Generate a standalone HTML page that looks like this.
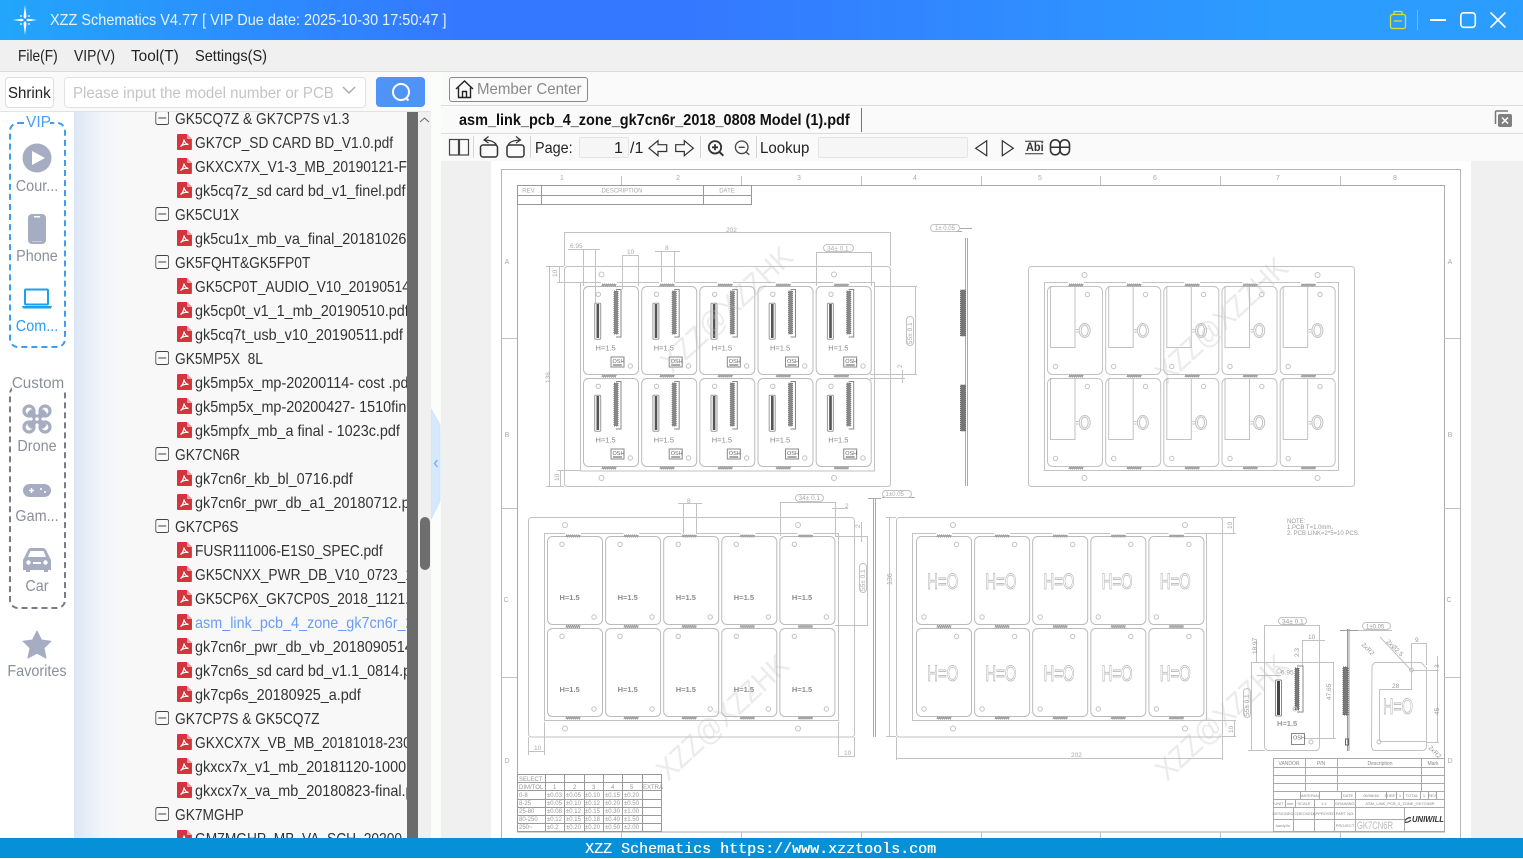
<!DOCTYPE html>
<html><head><meta charset="utf-8"><title>XZZ Schematics</title>
<style>
html,body{margin:0;padding:0;width:1523px;height:858px;overflow:hidden;background:#fff;font-family:"Liberation Sans","Noto Sans CJK SC",sans-serif;color:#333}
.a{position:absolute}
.t{position:absolute;white-space:pre;font-size:16px;line-height:20px;transform-origin:0 0}
#tree{position:absolute;left:74px;top:112px;width:333px;height:726px;overflow:hidden;background:linear-gradient(90deg,#dbe6f5 0,#f2f5f9 28px,#f8f8f8 50px)}
.r{position:absolute;height:24px;line-height:27px;font-size:16px;white-space:pre;color:#333;transform:scaleX(.86);transform-origin:0 0}
.g{left:101px}.c{left:121px}
.r svg{position:absolute;display:block}
.g svg{left:-23.260px;top:5px;width:16.280px;height:14px}
.c svg{left:-20.930px;top:4px;width:17.440px;height:16px}
.r.l{transform:scaleX(.9)}
.c.l svg{left:-20px;width:16.670px}
svg text{font-family:"Liberation Sans",sans-serif}
.side{font-size:16px;color:#8b8f98;text-align:center;width:74px;left:0;position:absolute;line-height:20px;transform:scaleX(.9)}
</style></head><body>
<svg width="0" height="0" style="position:absolute"><defs>
<symbol id="pdf" viewBox="0 0 15 16" preserveAspectRatio="none"><path d="M0 1Q0 0 1 0H10L15 5V15Q15 16 14 16H1Q0 16 0 15Z" fill="#d4343c"/><path d="M10 0V5H15Z" fill="#ee9a9e"/><path d="M3.500 12.500C5.500 11.500 7 8 7 5.500C7.500 8 9 10 11.500 10.500C9 10 6 10.500 3.500 12.500Z" fill="none" stroke="#fff" stroke-width="1.200"/></symbol>
<symbol id="minus" viewBox="0 0 14 14" preserveAspectRatio="none"><rect x=".5" y=".5" width="13" height="13" rx="2" fill="#fafafa" stroke="#444"/><path d="M3 7H11" stroke="#444"/></symbol>
</defs></svg>

<!-- title bar -->
<div class="a" style="left:0;top:0;width:1523px;height:40px;background:linear-gradient(90deg,#22a6fb 0,#3478ff 30%,#3478ff 45%,#2c9dff 85%,#2b9dff 100%)"></div>
<svg class="a" style="left:11px;top:5px" width="28" height="30" viewBox="0 0 28 30"><path d="M14 0L15.500 11.500 14 15 12.500 11.500ZM14 30L12.500 18.500 14 15 15.500 18.500ZM2 15L10.500 13.800 14 15 10.500 16.200ZM26 15L17.500 16.200 14 15 17.500 13.800Z" fill="#fff"/><circle cx="14" cy="15" r="1.500" fill="#3a8cff"/><circle cx="10" cy="11" r=".9" fill="#fff"/><circle cx="18" cy="11" r=".9" fill="#fff"/><circle cx="10" cy="19" r=".9" fill="#fff"/><circle cx="18" cy="19" r=".9" fill="#fff"/></svg>
<div class="t" id="title" style="left:50px;top:11px;color:#e6f2ff;transform:scaleX(.905)">XZZ Schematics V4.77 [ VIP Due date: 2025-10-30 17:50:47 ]</div>
<svg class="a" style="left:1385px;top:8px" width="130" height="24" viewBox="0 0 130 24" fill="none"><rect x="5.500" y="6.500" width="15" height="14" rx="2" stroke="#d8e22c" stroke-width="1.300"/><path d="M9 6.500V4.500Q9 3.500 10 3.500H16Q17 3.500 17 4.500V6.500M9 13H17" stroke="#d8e22c" stroke-width="1.300"/><path d="M32.500 2V22" stroke="#6ebcf5"/><path d="M45 12H61" stroke="#fff" stroke-width="2"/><rect x="75.800" y="4.800" width="14.500" height="14.500" rx="3" stroke="#fff" stroke-width="1.600"/><path d="M105.500 4.500L120.500 19.500M120.500 4.500L105.500 19.500" stroke="#fff" stroke-width="1.600"/></svg>

<!-- menu -->
<div class="a" style="left:0;top:40px;width:1523px;height:31px;background:#f0f0f0;border-bottom:1px solid #dcdcdc"></div>
<div class="t" style="left:18px;top:47px;color:#222;transform:scaleX(.86)">File(F)</div>
<div class="t" style="left:74px;top:47px;color:#222;transform:scaleX(.87)">VIP(V)</div>
<div class="t" style="left:131px;top:47px;color:#222;transform:scaleX(.96)">Tool(T)</div>
<div class="t" style="left:195px;top:47px;color:#222;transform:scaleX(.91)">Settings(S)</div>

<!-- search row -->
<div class="a" style="left:0;top:72px;width:431px;height:39px;background:#fafafa;border-bottom:1px solid #e2e2e2"></div>
<div class="a" style="left:5px;top:77px;width:47px;height:29px;background:#fff;border:1px solid #dedede;border-radius:4px"></div>
<div class="t" style="left:8px;top:84px;color:#222;transform:scaleX(.94)">Shrink</div>
<div class="a" style="left:64px;top:77px;width:300px;height:29px;background:#fff;border:1px solid #e2e2e2;border-radius:4px"></div>
<div class="t" style="left:73px;top:84px;color:#c4c4c4;transform:scaleX(.94)">Please input the model number or PCB</div>
<svg class="a" style="left:341px;top:85px" width="16" height="12"><path d="M2 2L8 8L14 2" fill="none" stroke="#aaa" stroke-width="1.400"/></svg>
<div class="a" style="left:376px;top:77px;width:49px;height:30px;background:#4f93f7;border-radius:4px"></div>
<svg class="a" style="left:388px;top:80px" width="26" height="24" fill="none" stroke="#fff" stroke-width="2"><circle cx="13" cy="12" r="8"/><path d="M18 18L20.500 20.500"/></svg>

<!-- left nav -->
<div class="a" style="left:0;top:112px;width:74px;height:726px;background:#fff"></div>
<div class="a" style="left:9px;top:122px;width:53px;height:222px;border:2px dashed #3f9cf3;border-radius:9px"></div>
<div class="a" style="left:26px;top:114px;width:24px;height:17px;background:#fff;text-align:center;color:#4a9df0;font-size:15.500px;line-height:18px">VIP</div>
<svg class="a" style="left:22px;top:143px" width="30" height="30"><circle cx="15" cy="15" r="14.500" fill="#a6adc3"/><path d="M10 8L23 15L10 22Z" fill="#fff"/></svg>
<div class="side" style="top:177px">Cour...</div>
<svg class="a" style="left:27px;top:213px" width="20" height="32"><rect x="1" y="1" width="18" height="30" rx="4" fill="#a6adc3"/><rect x="7" y="3" width="6" height="1.500" fill="#fff"/><rect x="5" y="28" width="10" height="1" fill="#c8cddc"/></svg>
<div class="side" style="top:247px">Phone</div>
<svg class="a" style="left:21px;top:288px" width="32" height="22"><rect x="4" y="1.500" width="23" height="15" rx="1" fill="#fff" stroke="#1aa0ef" stroke-width="2"/><path d="M1 18H31L30 20.500H2Z" fill="#1aa0ef"/></svg>
<div class="side" style="top:317px;color:#2d9bf0">Com...</div>

<div class="a" style="left:9px;top:385px;width:53px;height:220px;border:2px dashed #777d88;border-radius:9px"></div>
<div class="a" style="left:12px;top:374px;width:52px;height:16px;background:#fff"></div>
<div class="side" style="top:374px;left:1px;transform:scaleX(.95)">Custom</div>
<svg class="a" style="left:22px;top:404px" width="30" height="30" fill="none" stroke="#a6adc3"><path d="M7 7L23 23M23 7L7 23" stroke-width="5.500"/><circle cx="7" cy="7" r="5" stroke-width="3.200"/><circle cx="23" cy="7" r="5" stroke-width="3.200"/><circle cx="7" cy="23" r="5" stroke-width="3.200"/><circle cx="23" cy="23" r="5" stroke-width="3.200"/><circle cx="15" cy="15" r="2.500" fill="#fff" stroke-width="1.500"/></svg>
<div class="side" style="top:437px">Drone</div>
<svg class="a" style="left:22px;top:483px" width="30" height="16"><rect x="1" y="1" width="28" height="13" rx="6.500" fill="#a6adc3"/><path d="M7 7.500H12M9.500 5V10" stroke="#fff" stroke-width="1.400"/><circle cx="19" cy="6" r="1" fill="#fff"/><circle cx="23" cy="9" r="1" fill="#fff"/></svg>
<div class="side" style="top:507px">Gam...</div>
<svg class="a" style="left:22px;top:546px" width="30" height="28"><path d="M2 12L6 4Q7 2 9 2H21Q23 2 24 4L28 12Q29 13 29 15V24H26V26H22V24H8V26H4V24H1V15Q1 13 2 12Z" fill="#a6adc3"/><path d="M6 11L8.500 5H21.500L24 11Z" fill="#fff"/><circle cx="6.500" cy="16.500" r="2.200" fill="#fff"/><circle cx="23.500" cy="16.500" r="2.200" fill="#fff"/><rect x="11" y="16" width="8" height="2" fill="#fff"/></svg>
<div class="side" style="top:577px">Car</div>
<svg class="a" style="left:22px;top:630px" width="30" height="29"><path d="M15 1L19.500 10L29 11.200L22 18L24 28L15 23.200L6 28L8 18L1 11.200L10.500 10Z" fill="#a6adc3" stroke="#a6adc3" stroke-linejoin="round"/></svg>
<div class="side" style="top:662px">Favorites</div>

<!-- tree -->
<div id="tree">
<div class="r g" style="top:-6px"><svg><use href="#minus"/></svg>GK5CQ7Z &amp; GK7CP7S v1.3</div>
<div class="r c" style="top:18px"><svg><use href="#pdf"/></svg>GK7CP_SD CARD BD_V1.0.pdf</div>
<div class="r c" style="top:42px"><svg><use href="#pdf"/></svg>GKXCX7X_V1-3_MB_20190121-F</div>
<div class="r c l" style="top:66px"><svg><use href="#pdf"/></svg>gk5cq7z_sd card bd_v1_finel.pdf</div>
<div class="r g" style="top:90px"><svg><use href="#minus"/></svg>GK5CU1X</div>
<div class="r c l" style="top:114px"><svg><use href="#pdf"/></svg>gk5cu1x_mb_va_final_20181026</div>
<div class="r g" style="top:138px"><svg><use href="#minus"/></svg>GK5FQHT&amp;GK5FP0T</div>
<div class="r c" style="top:162px"><svg><use href="#pdf"/></svg>GK5CP0T_AUDIO_V10_20190514</div>
<div class="r c l" style="top:186px"><svg><use href="#pdf"/></svg>gk5cp0t_v1_1_mb_20190510.pdf</div>
<div class="r c l" style="top:210px"><svg><use href="#pdf"/></svg>gk5cq7t_usb_v10_20190511.pdf</div>
<div class="r g" style="top:234px"><svg><use href="#minus"/></svg>GK5MP5X  8L</div>
<div class="r c l" style="top:258px"><svg><use href="#pdf"/></svg>gk5mp5x_mp-20200114- cost .pdf</div>
<div class="r c l" style="top:282px"><svg><use href="#pdf"/></svg>gk5mp5x_mp-20200427- 1510final</div>
<div class="r c l" style="top:306px"><svg><use href="#pdf"/></svg>gk5mpfx_mb_a final - 1023c.pdf</div>
<div class="r g" style="top:330px"><svg><use href="#minus"/></svg>GK7CN6R</div>
<div class="r c l" style="top:354px"><svg><use href="#pdf"/></svg>gk7cn6r_kb_bl_0716.pdf</div>
<div class="r c l" style="top:378px"><svg><use href="#pdf"/></svg>gk7cn6r_pwr_db_a1_20180712.pdf</div>
<div class="r g" style="top:402px"><svg><use href="#minus"/></svg>GK7CP6S</div>
<div class="r c" style="top:426px"><svg><use href="#pdf"/></svg>FUSR111006-E1S0_SPEC.pdf</div>
<div class="r c" style="top:450px"><svg><use href="#pdf"/></svg>GK5CNXX_PWR_DB_V10_0723_1</div>
<div class="r c" style="top:474px"><svg><use href="#pdf"/></svg>GK5CP6X_GK7CP0S_2018_1121.pdf</div>
<div class="r c l" style="top:498px;color:#6a9cf5"><svg><use href="#pdf"/></svg>asm_link_pcb_4_zone_gk7cn6r_2018</div>
<div class="r c l" style="top:522px"><svg><use href="#pdf"/></svg>gk7cn6r_pwr_db_vb_2018090514</div>
<div class="r c l" style="top:546px"><svg><use href="#pdf"/></svg>gk7cn6s_sd card bd_v1.1_0814.pdf</div>
<div class="r c l" style="top:570px"><svg><use href="#pdf"/></svg>gk7cp6s_20180925_a.pdf</div>
<div class="r g" style="top:594px"><svg><use href="#minus"/></svg>GK7CP7S &amp; GK5CQ7Z</div>
<div class="r c" style="top:618px"><svg><use href="#pdf"/></svg>GKXCX7X_VB_MB_20181018-2300</div>
<div class="r c l" style="top:642px"><svg><use href="#pdf"/></svg>gkxcx7x_v1_mb_20181120-1000</div>
<div class="r c l" style="top:666px"><svg><use href="#pdf"/></svg>gkxcx7x_va_mb_20180823-final.pdf</div>
<div class="r g" style="top:690px"><svg><use href="#minus"/></svg>GK7MGHP</div>
<div class="r c" style="top:714px"><svg><use href="#pdf"/></svg>GM7MGHP_MB_VA_SCH_20200</div>
</div>
<!-- scrollbars -->
<div class="a" style="left:407px;top:112px;width:11px;height:726px;background:#6b6b6b"></div>
<div class="a" style="left:418px;top:112px;width:13px;height:726px;background:#f0f0f0"></div>
<svg class="a" style="left:418px;top:115px" width="13" height="10"><path d="M2 7L6.500 3L11 7" fill="none" stroke="#666"/></svg>
<div class="a" style="left:419.500px;top:517px;width:10px;height:53px;background:#6e6e6e;border-radius:5px"></div>
<div class="a" style="left:431px;top:72px;width:10px;height:766px;background:#fbfdfb;border-right:1px solid #e0e0e0"></div>
<svg class="a" style="left:431px;top:405px" width="10" height="118"><path d="M0 4L9 20V96L0 114Z" fill="#d6e9fc" stroke="#cfe3f8"/><path d="M6.500 55L3.500 58.500L6.500 62" fill="none" stroke="#6aaaf0" stroke-width="1.200"/></svg>

<!-- right panel -->
<div class="a" style="left:441px;top:72px;width:1082px;height:33px;background:#fafafa;border-bottom:1px solid #dcdcdc"></div>
<div class="a" style="left:441px;top:106px;width:1082px;height:27px;background:#fafafa;border-bottom:1px solid #dcdcdc"></div>
<div class="a" style="left:441px;top:134px;width:1082px;height:27px;background:#fafafa"></div>
<div class="a" style="left:449px;top:77px;width:137px;height:23px;border:1px solid #8a8a8a;border-radius:3px"></div>
<svg class="a" style="left:455px;top:79px" width="19" height="20" fill="none" stroke="#222" stroke-width="1.400"><path d="M1 10L9.500 2L18 10M3.500 8.500V18.500H15.500V8.500M7.500 18.500V12.500H11.500V18.500"/></svg>
<div class="t" style="left:477px;top:80px;color:#8a8a8a;transform:scaleX(.94)">Member Center</div>
<div class="t" style="left:459px;top:111px;color:#111;font-weight:bold;transform:scaleX(.904)">asm_link_pcb_4_zone_gk7cn6r_2018_0808 Model (1).pdf</div>
<div class="a" style="left:861px;top:108px;width:1px;height:24px;background:#777"></div>
<svg class="a" style="left:1493px;top:109px" width="20" height="20"><path d="M2.500 15V3Q2.500 2 3.500 2H15" fill="none" stroke="#777" stroke-width="1.500"/><rect x="5" y="5" width="14" height="13" rx="2" fill="#808080"/><path d="M9 8.500L15 14.500M15 8.500L9 14.500" stroke="#fff" stroke-width="1.500"/></svg>

<!-- toolbar -->
<svg class="a" style="left:441px;top:134px" width="640" height="27" fill="none" stroke="#333" stroke-width="1.200">
<rect x="8.500" y="5.500" width="9" height="15.500" stroke="#444"/><rect x="18.500" y="5.500" width="9" height="15.500" stroke="#444"/>
<path d="M32.500 2V24M89.500 2V24M259.500 2V24M315.500 2V24" stroke="#d5d5d5" stroke-width="1"/>
<rect x="39.500" y="11" width="17" height="12" rx="2.500" stroke-width="1.500"/><path d="M55.500 11Q53 6.500 44 6M47.500 2.500L43 6L47.500 9" stroke-width="1.200"/>
<rect x="66" y="11" width="17" height="12" rx="2.500" stroke-width="1.500"/><path d="M67 11Q69.500 6.500 78.500 6M75 2.500L79.500 6L75 9" stroke-width="1.200"/>
<path d="M208 14.200L217 6.700V10.700H225.700V17.500H217V21.700Z"/><path d="M252.300 14.200L243.300 6.700V10.700H234.700V17.500H243.300V21.700Z"/>
<circle cx="274" cy="13.300" r="6.200" stroke-width="1.800"/><path d="M278.500 18L282.300 21.700" stroke-width="2"/><path d="M271 13.300H277M274 10.300V16.300" stroke-width="1.800"/>
<circle cx="300.700" cy="13.300" r="6.300" stroke="#444" stroke-width="1.300"/><path d="M305 18L308.300 20.700M297.700 13.300H303.700" stroke="#444" stroke-width="1.300"/>
<path d="M545.700 6.700L534.700 14.200L545.700 21.700Z"/><path d="M561.300 6.700L572.300 14.200L561.300 21.700Z"/>
<path d="M584 7.300H602.300M584 19.800H602.300" stroke-width="1"/>
<rect x="609.500" y="5.800" width="9.500" height="15" rx="4.700" stroke-width="1.600"/><rect x="619" y="5.800" width="9.500" height="15" rx="4.700" stroke-width="1.600"/><path d="M609.500 13.300H628.500" stroke-width="1.500"/>
</svg>
<div class="t" style="left:1026px;top:142px;font-size:11.500px;font-weight:bold;color:#333;line-height:12px;transform:scaleX(.95)">Abi</div>
<div class="t" style="left:535px;top:139px;color:#222;transform:scaleX(.9)">Page:</div>
<div class="a" style="left:579px;top:137px;width:48px;height:19px;background:#f6f6f6;border:1px solid #e4e4e4;border-radius:2px"></div>
<div class="t" style="left:614px;top:139px;color:#222">1</div>
<div class="t" style="left:630px;top:139px;color:#222">/1</div>
<div class="t" style="left:760px;top:139px;color:#222;transform:scaleX(.94)">Lookup</div>
<div class="a" style="left:818px;top:137px;width:148px;height:19px;background:#f6f6f6;border:1px solid #e4e4e4;border-radius:2px"></div>

<!-- viewer -->
<div class="a" style="left:441px;top:161px;width:1082px;height:677px;background:#f0f0f0"></div>
<div class="a" style="left:491px;top:161px;width:980px;height:677px;background:#fff"></div>
<svg class="a" style="left:0;top:0" width="1523" height="838" viewBox="0 0 1523 838" fill="none" stroke="#c2c2c2" stroke-width="1">
<defs>
<g id="ba"><rect x=".5" y=".5" width="55" height="88" rx="5" fill="#fff" stroke="#bbb"/>
<circle cx="15.300" cy="8.300" r="2.200"/><circle cx="47.300" cy="80" r="2.200"/>
<rect x="11.700" y="17.300" width="6" height="36" rx="1" stroke="#999" fill="#fff"/><rect x="13.500" y="18" width="2.600" height="34" fill="#555" stroke="none"/>
<path d="M33 3.500H38V51H33" stroke="#888"/><rect x="31" y="5" width="4" height="43" fill="#888" stroke="#777" stroke-dasharray="1 1"/>
<text x="12.500" y="64.500" font-size="7.500" fill="#888" stroke="none">H=1.5</text>
<rect x="28" y="71" width="13" height="10" fill="#fff" stroke="#888"/><text x="29.500" y="77" font-size="5.500" fill="#666" stroke="none">OSH</text><path d="M30 79H39" stroke="#555"/></g>
<g id="bb"><rect x=".5" y=".5" width="55" height="88" rx="5" fill="#fff"/>
<rect x="3.500" y=".5" width="24.500" height="61" />
<circle cx="40.300" cy="8.500" r="2.200"/><circle cx="8.500" cy="80.500" r="2.200"/>
<ellipse cx="37.700" cy="44.500" rx="5.500" ry="7"/><ellipse cx="37.700" cy="44.500" rx="3.500" ry="5.500"/><path d="M29 43.500H31.500M29 46H31.500"/></g>
<g id="bc"><rect x=".5" y=".5" width="55" height="88" rx="5" fill="#fff" stroke="#bbb"/><circle cx="15" cy="8.300" r="2.200"/><circle cx="47" cy="81" r="2.200"/>
<text x="12.500" y="64" font-size="7.500" font-weight="bold" fill="#8c8c8c" stroke="none">H=1.5</text></g>
<g id="bd"><rect x=".5" y=".5" width="55" height="88" rx="5" fill="#fff" stroke="#bbb"/><circle cx="40.500" cy="8.500" r="2.200"/><circle cx="8" cy="81" r="2.200"/>
<text x="11.300" y="53" font-size="22" fill="#fff" stroke="#b0b0b0" stroke-width=".7" textLength="31" lengthAdjust="spacingAndGlyphs">H=O</text></g>
<g id="tab"><rect x="0" y="0" width="14" height="2" fill="#aaa" stroke="#999" stroke-dasharray="1 1"/></g>
<g id="tabT"><rect x="-1" y="-2.500" width="16" height="2" fill="#fff" stroke="none"/><rect x="0" y="0" width="14" height="2" fill="#aaa" stroke="#999" stroke-dasharray="1 1"/></g>
<g id="row5a"><use href="#ba"/><use href="#ba" x="58.200"/><use href="#ba" x="116.300"/><use href="#ba" x="174.500"/><use href="#ba" x="232.700"/></g>
<g id="row5b"><use href="#bb"/><use href="#bb" x="58.200"/><use href="#bb" x="116.300"/><use href="#bb" x="174.500"/><use href="#bb" x="232.700"/></g>
<g id="row5c"><use href="#bc"/><use href="#bc" x="58.100"/><use href="#bc" x="116.200"/><use href="#bc" x="174.300"/><use href="#bc" x="232.400"/></g>
<g id="row5d"><use href="#bd"/><use href="#bd" x="58.100"/><use href="#bd" x="116.200"/><use href="#bd" x="174.300"/><use href="#bd" x="232.400"/></g>
<g id="tabs"><use href="#tab"/><use href="#tab" x="58.100"/><use href="#tab" x="116.200"/><use href="#tab" x="174.300"/><use href="#tab" x="232.400"/></g>
<g id="tabsT"><use href="#tabT"/><use href="#tabT" x="58.100"/><use href="#tabT" x="116.200"/><use href="#tabT" x="174.300"/><use href="#tabT" x="232.400"/></g>
</defs>
<!-- sheet frame -->
<rect x="501.500" y="169.500" width="959" height="720" stroke="#b5b5b5"/>
<rect x="517.500" y="185.500" width="927" height="646.500" stroke="#aaa"/>
<path d="M621.500 176V185M741.500 176V185M861.500 176V185M981.500 176V185M1100.500 176V185M1220.500 176V185M1340.500 176V185M501 338.500H517M501 508.500H517M501 677.500H517M1444 338.500H1460M1444 508.500H1460M1444 677.500H1460M621.500 832V838M741.500 832V838M861.500 832V838M981.500 832V838M1100.500 832V838M1220.500 832V838M1340.500 832V838"/>
<g fill="#aaa" stroke="none" font-size="7" text-anchor="middle"><text x="562" y="180">1</text><text x="678" y="180">2</text><text x="799" y="180">3</text><text x="915" y="180">4</text><text x="1040" y="180">5</text><text x="1155" y="180">6</text><text x="1278" y="180">7</text><text x="1395" y="180">8</text>
<text x="507" y="264">A</text><text x="507" y="437">B</text><text x="506" y="602">C</text><text x="507" y="763">D</text><text x="1450" y="264">A</text><text x="1450" y="437">B</text><text x="1449" y="602">C</text><text x="1450" y="763">D</text></g>
<!-- rev table -->
<path d="M517.500 185.500H751.500V204.500H517.500ZM517.500 195.500H751.500M541.500 185.500V204.500M703.500 185.500V204.500" stroke="#999"/>
<g fill="#aaa" stroke="none" font-size="6" text-anchor="middle" style="font-family:'Liberation Mono',monospace"><text x="529" y="192.500">REV.</text><text x="622" y="192.500">DESCRIPTION</text><text x="727" y="192.500">DATE</text></g>

<!-- panel A -->
<rect x="564.500" y="266.500" width="326" height="220" rx="3"/>
<rect x="580.500" y="282.500" width="294" height="188.500"/>
<use href="#row5a" x="583" y="286"/><use href="#row5a" x="583" y="378"/>
<use href="#tabsT" x="602" y="284"/><use href="#tabs" x="602" y="375"/><use href="#tabs" x="602" y="467"/>
<circle cx="601.500" cy="274.500" r="2.500"/><circle cx="834" cy="274.500" r="2.500"/><circle cx="601.500" cy="478" r="2.500"/><circle cx="834" cy="478" r="2.500"/>
<path d="M564.500 232.500H890.500M564.500 232V266M890.500 232V266M568 249.500H600M583.500 249V286M595.500 249V303M622.500 255.500H638.500M622.500 255V289M638.500 255V286M655 251.500H680M661.500 251V282M674.500 251V282M816.500 252.500H871.500M816.500 252V286M871.500 252V286M549.500 266V486M546 266.500H564M546 486.500H564M559.500 266V282M557 282.500H580M560.500 470V486M557 470.500H580M915.500 286V374M874 286.500H917M870 374.500H917M902.500 370V383M870 378.500H905" stroke="#c2c2c2"/>
<rect x="823.500" y="244.500" width="30" height="7" rx="3.500"/>
<rect x="906.500" y="316.500" width="7" height="29" rx="3.500"/>
<g fill="#aaa" stroke="none" font-size="6.500"><text x="726" y="232">202</text><text x="570" y="248">6.95</text><text x="627" y="254">10</text><text x="665" y="250">8</text><text x="827" y="250.500">34± 0.1</text>
<text transform="translate(912,344) rotate(-90)">55± 0.1</text><text transform="translate(550,383) rotate(-90)">136</text><text transform="translate(557,277) rotate(-90)">10</text><text transform="translate(559,481) rotate(-90)">10</text><text transform="translate(902,368) rotate(-90)">2</text></g>
<!-- side view A -->
<path d="M965.500 238V486M967.500 238V486M960 228.500H972M943 231.500H962" stroke="#aaa"/>
<rect x="960.500" y="290" width="5" height="46" fill="#777" stroke="#666" stroke-dasharray="1 1"/>
<rect x="960.500" y="385" width="5" height="46" fill="#777" stroke="#666" stroke-dasharray="1 1"/>
<rect x="930.500" y="224.500" width="29" height="7" rx="3.500"/><text x="935" y="230" font-size="6" fill="#aaa" stroke="none">1± 0.05</text>

<!-- panel B -->
<rect x="1028.500" y="266.500" width="326" height="220" rx="3"/>
<rect x="1044.500" y="282.500" width="294" height="188"/>
<use href="#row5b" x="1047" y="286"/><use href="#row5b" x="1047" y="378"/>
<use href="#tabsT" x="1069" y="284"/><use href="#tabs" x="1069" y="375"/><use href="#tabs" x="1069" y="467"/>
<circle cx="1084.500" cy="275" r="2.500"/><circle cx="1317.500" cy="275" r="2.500"/><circle cx="1084.500" cy="478" r="2.500"/><circle cx="1317.500" cy="478" r="2.500"/>

<!-- panel C -->
<rect x="528.500" y="517.500" width="326" height="219.500" rx="3"/>
<rect x="544.500" y="533.500" width="294" height="187"/>
<use href="#row5c" x="547" y="536"/><use href="#row5c" x="547" y="628"/>
<use href="#tabsT" x="566" y="535"/><use href="#tabs" x="566" y="625.500"/><use href="#tabs" x="566" y="717"/>
<circle cx="565" cy="525" r="2.500"/><circle cx="798" cy="525" r="2.500"/><circle cx="565" cy="728.500" r="2.500"/><circle cx="798" cy="728.500" r="2.500"/>
<path d="M678 503.500H702M683.500 503V534M696.500 503V534M780.500 502.500H835.500M780.500 502V536M835.500 502V536M832 508.500H848M835.500 508V537M867.500 536V625M835 536.500H868M835 625.500H868M861.500 522V542M528.500 737V755M544.500 722V755M528 751.500H545M838.500 722V757M854.500 737V757M838 756.500H855"/>
<rect x="795.500" y="494.500" width="28" height="7" rx="3.500"/><rect x="859.500" y="563.500" width="7" height="29" rx="3.500"/>
<g fill="#aaa" stroke="none" font-size="6.500"><text x="687" y="503">8</text><text x="798.500" y="500">34± 0.1</text><text x="845" y="508">2</text><text x="534" y="750">10</text><text x="844" y="755">10</text><text transform="translate(865,591) rotate(-90)">55± 0.1</text><text transform="translate(860,528) rotate(-90)">2</text></g>
<!-- side view C -->
<path d="M873.500 498V737M875.500 498V737M868 498.500H881M882 497.500H915" stroke="#aaa"/>
<rect x="882.500" y="490.500" width="29" height="7" rx="3.500"/><text x="885.500" y="496" font-size="6" fill="#aaa" stroke="none">1±0.05</text>

<!-- panel D -->
<rect x="896.500" y="517.500" width="326" height="219.500" rx="3"/>
<rect x="912.500" y="533.500" width="294" height="187"/>
<use href="#row5d" x="916" y="536"/><use href="#row5d" x="916" y="628"/>
<use href="#tabsT" x="937" y="535"/><use href="#tabs" x="937" y="625.500"/><use href="#tabs" x="937" y="717"/>
<circle cx="953" cy="525" r="2.500"/><circle cx="1185" cy="525" r="2.500"/><circle cx="953" cy="728.500" r="2.500"/><circle cx="1185" cy="728.500" r="2.500"/>
<path d="M889.500 517V737M886 517.500H896M886 736.500H896M896.500 737V760M1222.500 737V760M896 758.500H1222M1206 533.500H1236M1206 720.500H1236M1233.500 518V533M1234.500 720V737M1222 517.500H1236M1222 736.500H1236"/>
<g fill="#aaa" stroke="none" font-size="6.500"><text x="1071" y="757">202</text><text transform="translate(892,585) rotate(-90)" font-size="7">136</text><text transform="translate(1232,529) rotate(-90)">10</text><text transform="translate(1233,733) rotate(-90)">10</text></g>

<!-- notes -->
<g fill="#999" stroke="none" font-size="6" style="font-family:'Liberation Mono',monospace"><text x="1287" y="523">NOTE:</text><text x="1287" y="529">1.PCB T=1.0mm.</text><text x="1287" y="535">2. PCB LINK=2*5=10 PCS.</text></g>

<!-- detail front -->
<path d="M1264.500 662V746Q1264.500 750.500 1269 750.500H1315Q1319.500 750.500 1319.500 746V662"/>
<path d="M1251 662.500H1334M1251.500 662V751M1248 750.500H1265M1264.500 626V662M1319.500 626V662M1264 625.500H1320M1302 640.500H1325M1302.500 640V666M1333.500 662V739M1304 738.500H1336M1257 675.500H1281M1256.500 640V662"/>
<rect x="1275.500" y="680" width="6" height="36" rx="1" stroke="#888"/><rect x="1277" y="681" width="3" height="34" fill="#444" stroke="none"/>
<path d="M1297 666H1303V712H1297" stroke="#888"/><rect x="1295" y="668" width="4" height="42" fill="#777" stroke="#666" stroke-dasharray="1 1"/>
<circle cx="1279" cy="671" r="2.200"/><circle cx="1295" cy="709" r="2"/><circle cx="1311" cy="742" r="2"/>
<rect x="1291.500" y="733.500" width="13" height="11" stroke="#888"/><text x="1293" y="739.500" font-size="5.500" fill="#666" stroke="none">OSH</text>
<rect x="1278.500" y="617.500" width="28" height="7" rx="3.500"/>
<rect x="1243.500" y="688.500" width="7" height="29" rx="3.500"/>
<g fill="#999" stroke="none" font-size="6.500"><text x="1282" y="623.500">34± 0.1</text><text x="1308" y="639">10</text><text x="1281" y="674.500">6.95</text><text x="1277" y="726" font-size="7.500" font-weight="bold">H=1.5</text>
<text transform="translate(1257,654) rotate(-90)">18.97</text><text transform="translate(1299,657) rotate(-90)">2.3</text><text transform="translate(1331,700) rotate(-90)">47.65</text><text transform="translate(1249,716) rotate(-90)">55± 0.1</text></g>
<!-- detail side -->
<path d="M1347.500 629V751M1349 629V751M1348 630.500H1358M1340 630.500H1347" stroke="#999"/>
<rect x="1343" y="667" width="5" height="48" fill="#777" stroke="#666" stroke-dasharray="1 1"/><rect x="1345.500" y="739" width="3" height="6" stroke="#666"/>
<rect x="1362.500" y="622.500" width="28" height="7" rx="3.500"/><path d="M1358 630.500H1392"/><text x="1366" y="628.500" font-size="6" fill="#999" stroke="none">1±0.05</text>
<!-- detail back -->
<path d="M1372 665.500L1375 662.500H1421L1426.500 668V746Q1426.500 750.500 1422 750.500H1376Q1371.500 750.500 1371.500 746Z"/>
<path d="M1411.500 670V643M1426.500 643V665M1411 643.500H1427M1411.500 670V689M1379 689.500H1412M1379.500 689V741M1411 670.500H1439M1426 742.500H1439M1437.500 656V743M1380 741.500H1426M1380 637L1411 670"/>
<circle cx="1411.500" cy="670" r="2"/><circle cx="1379" cy="742" r="2"/>
<text x="1383" y="714" font-size="22" fill="#fff" stroke="#b0b0b0" stroke-width=".7" textLength="30" lengthAdjust="spacingAndGlyphs">H=O</text>
<g fill="#999" stroke="none" font-size="6.500"><text x="1415" y="642">9</text><text x="1392" y="688">28</text><text transform="translate(1439,715) rotate(-90)">45</text><text transform="translate(1439,668) rotate(-90)">3</text><text transform="translate(1361,645) rotate(45)">2xR2</text><text transform="translate(1386,642) rotate(45)">2xØ2.5</text><text transform="translate(1428,748) rotate(45)">2xR2</text></g>

<!-- title block -->
<path d="M1273.500 758.500H1444.500V831.500H1273.500ZM1273.500 767.500H1444.500M1273.500 775.500H1444.500M1273.500 783.500H1444.500M1273.500 791.500H1444.500M1273.500 799.500H1444.500M1273.500 807.500H1444.500M1273.500 819.500H1404M1305.500 758.500V791.500M1337.500 758.500V791.500M1421.500 758.500V791.500M1300.500 791.500V799.500M1319.500 791.500V799.500M1341.500 791.500V799.500M1355.500 791.500V831.500M1386.500 791.500V799.500M1396.500 791.500V799.500M1403.500 791.500V799.500M1420.500 791.500V799.500M1428.500 791.500V799.500M1436.500 791.500V799.500M1285.500 799.500V807.500M1295.500 799.500V807.500M1314.500 799.500V831.500M1334.500 799.500V831.500M1293.500 807.500V831.500M1404.500 807.500V831.500" stroke="#aaa"/>
<g fill="#888" stroke="none" font-size="4" style="font-family:'Liberation Mono',monospace" text-anchor="middle"><text x="1289" y="765" font-size="5">VANDOR</text><text x="1321" y="765" font-size="5">P/N</text><text x="1380" y="765" font-size="5">Description</text><text x="1433" y="765" font-size="5">Mark</text>
<text x="1310" y="797">MATERIAL</text><text x="1348" y="797">DATE</text><text x="1371" y="797">06/08/48</text><text x="1391" y="797">SHEET</text><text x="1400" y="797">1</text><text x="1412" y="797">TOTAL</text><text x="1424" y="797">1</text><text x="1432" y="797">REV</text>
<text x="1279" y="805">UNIT</text><text x="1290" y="805">mm</text><text x="1304" y="805">SCALE</text><text x="1324" y="805">1:1</text><text x="1345" y="805">DRAWING</text><text x="1400" y="805">ASM_LINK_PCB_4_ZONE_GK7CN6R</text>
<text x="1283" y="815">DESIGNED</text><text x="1304" y="815">CHECKED</text><text x="1324" y="815">APPROVED</text><text x="1345" y="815">PART NO.</text><text x="1283" y="827">hardy.liu</text><text x="1345" y="827">PROJECT</text></g>
<text x="1357" y="829" font-size="11" fill="#bbb" stroke="none" textLength="36" lengthAdjust="spacingAndGlyphs">GK7CN6R</text>
<text x="1412" y="822" font-size="8" font-weight="bold" font-style="italic" fill="#333" stroke="none" textLength="32" lengthAdjust="spacingAndGlyphs">UNIWILL</text>
<path d="M1405 820.500Q1408 817 1411 818M1405 822Q1408 823 1411 820" stroke="#333" stroke-width="1.200"/>

<!-- tolerance table -->
<path d="M517.500 774.500H661.500V831.500H517.500ZM517.500 782.500H661.500M517.500 790.500H661.500M517.500 799.500H661.500M517.500 807.500H661.500M517.500 815.500H661.500M517.500 823.500H661.500M545.500 774.500V831.500M564.500 774.500V831.500M584.500 774.500V831.500M603.500 774.500V831.500M622.500 774.500V831.500M642.500 774.500V831.500" stroke="#999"/>
<g fill="#999" stroke="none" font-size="6" style="font-family:'Liberation Mono',monospace">
<text x="519" y="781">SELECT</text><text x="519" y="789">DIM/TOL</text><text x="553" y="789">1</text><text x="573" y="789">2</text><text x="592" y="789">3</text><text x="611" y="789">4</text><text x="630" y="789">5</text><text x="643" y="789">EXTRA</text>
<text x="519" y="797">0-8</text><text x="547" y="797">±0.03</text><text x="566" y="797">±0.05</text><text x="585" y="797">±0.10</text><text x="605" y="797">±0.15</text><text x="624" y="797">±0.20</text>
<text x="519" y="805">8-25</text><text x="547" y="805">±0.05</text><text x="566" y="805">±0.10</text><text x="585" y="805">±0.12</text><text x="605" y="805">±0.20</text><text x="624" y="805">±0.50</text>
<text x="519" y="813">25-80</text><text x="547" y="813">±0.08</text><text x="566" y="813">±0.12</text><text x="585" y="813">±0.15</text><text x="605" y="813">±0.30</text><text x="624" y="813">±1.00</text>
<text x="519" y="821">80-250</text><text x="547" y="821">±0.12</text><text x="566" y="821">±0.15</text><text x="585" y="821">±0.18</text><text x="605" y="821">±0.40</text><text x="624" y="821">±1.50</text>
<text x="519" y="829">250~</text><text x="547" y="829">±0.2</text><text x="566" y="829">±0.20</text><text x="585" y="829">±0.20</text><text x="605" y="829">±0.50</text><text x="624" y="829">±2.00</text>
</g>
<!-- watermark -->
<g fill="#bdbdbd" fill-opacity=".3" stroke="none" font-size="30">
<text transform="translate(672,374) rotate(-43)" textLength="168" lengthAdjust="spacingAndGlyphs">XZZ@XZZHK</text>
<text transform="translate(1167,385) rotate(-43)" textLength="168" lengthAdjust="spacingAndGlyphs">XZZ@XZZHK</text>
<text transform="translate(668,782) rotate(-43)" textLength="168" lengthAdjust="spacingAndGlyphs">XZZ@XZZHK</text>
<text transform="translate(1167,782) rotate(-43)" textLength="168" lengthAdjust="spacingAndGlyphs">XZZ@XZZHK</text>
</g>
</svg>

<!-- status bar -->
<div class="a" style="left:0;top:838px;width:1523px;height:20px;background:#0690d8"></div>
<div class="t" style="left:585px;top:840px;color:#fff;font-family:'Liberation Mono',monospace;font-size:15px;line-height:19px;text-shadow:.3px 0 0 #fff">XZZ Schematics https://www.xzztools.com</div>
</body></html>
